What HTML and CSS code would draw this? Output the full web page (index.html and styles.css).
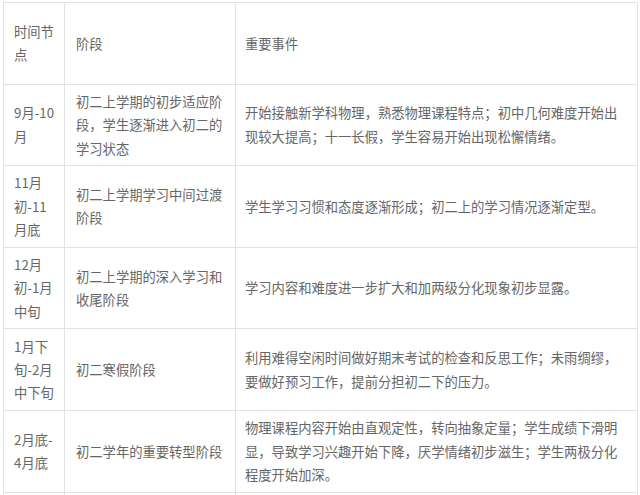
FILE: index.html
```html
<!DOCTYPE html>
<html lang="zh-CN">
<head>
<meta charset="utf-8">
<title>初二学习阶段</title>
<link rel="stylesheet" href="styles.css">
</head>
<body>
<table class="stages">
  <colgroup>
    <col class="c-time">
    <col class="c-stage">
    <col class="c-event">
  </colgroup>
  <tr class="row">
    <td>时间节<br>点</td>
    <td>阶段</td>
    <td>重要事件</td>
  </tr>
  <tr class="row">
    <td>9月-10<br>月</td>
    <td>初二上学期的初步适应阶<br>段，学生逐渐进入初二的<br>学习状态</td>
    <td>开始接触新学科物理，熟悉物理课程特点；初中几何难度开始出<br>现较大提高；十一长假，学生容易开始出现松懈情绪。</td>
  </tr>
  <tr class="row">
    <td>11月<br>初-11<br>月底</td>
    <td>初二上学期学习中间过渡<br>阶段</td>
    <td>学生学习习惯和态度逐渐形成；初二上的学习情况逐渐定型。</td>
  </tr>
  <tr class="row">
    <td>12月<br>初-1月<br>中旬</td>
    <td>初二上学期的深入学习和<br>收尾阶段</td>
    <td>学习内容和难度进一步扩大和加两级分化现象初步显露。</td>
  </tr>
  <tr class="row">
    <td>1月下<br>旬-2月<br>中下旬</td>
    <td>初二寒假阶段</td>
    <td>利用难得空闲时间做好期末考试的检查和反思工作；未雨绸缪，<br>要做好预习工作，提前分担初二下的压力。</td>
  </tr>
  <tr class="row">
    <td>2月底-<br>4月底</td>
    <td>初二学年的重要转型阶段</td>
    <td>物理课程内容开始由直观定性，转向抽象定量；学生成绩下滑明<br>显，导致学习兴趣开始下降，厌学情绪初步滋生；学生两极分化<br>程度开始加深。</td>
  </tr>
  <tr class="row">
    <td></td>
    <td></td>
    <td></td>
  </tr>
</table>
</body>
</html>
```

FILE: styles.css
```css
html, body {
  margin: 0;
  padding: 0;
  background: #ffffff;
  overflow: hidden;
  height: 495px;
}

.stages {
  margin: 2px 0 0 3px;
  width: 634px;
  border-collapse: collapse;
  table-layout: fixed;
  font-family: "Noto Sans CJK SC", "Noto Sans", sans-serif;
  font-size: 13.3px;
  line-height: 23.4px;
  color: #666666;
}

.c-time { width: 61px; }
.c-stage { width: 171px; }
.c-event { width: 402px; }

.row td {
  border: 1px solid #e2e2e2;
  padding: 0 6px 0 10px;
  height: 80.6px;
  vertical-align: middle;
  white-space: nowrap;
  overflow: hidden;
}

.row td:nth-child(2) {
  padding-left: 11px;
}

.row td:nth-child(3) {
  padding-left: 9px;
}
```
